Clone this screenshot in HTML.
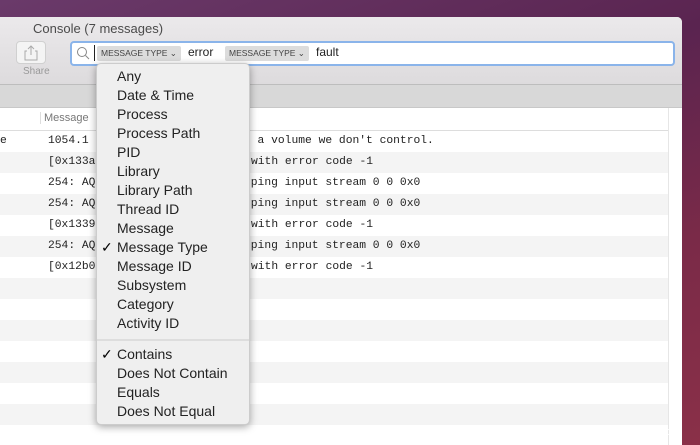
<!DOCTYPE html><html><head><style>
html,body{margin:0;width:700px;height:445px;overflow:hidden}
body{position:relative;font-family:"Liberation Sans",sans-serif;
background:linear-gradient(160deg,#6a3a6a 0%,#5a2450 40%,#7a2a48 70%,#8a3048 100%);}
.win{position:absolute;left:0;top:17px;width:682px;height:428px;background:#fff;border-radius:0 5px 0 0;overflow:hidden}
.tb{position:absolute;left:0;top:0;width:682px;height:67px;background:linear-gradient(#ebe9eb,#dddbdd);border-bottom:1px solid #bdbdbd}
.title{position:absolute;left:33px;top:4px;font-size:13px;color:#4a4a4a}
.share{position:absolute;left:16px;top:24px;width:28px;height:21px;border:1px solid #d0d0d0;border-radius:4px;background:#f4f4f4}
.sl{position:absolute;left:23px;top:49px;font-size:10px;color:#999}
.search{position:absolute;left:70px;top:24px;width:601px;height:21px;border:2px solid #8ab4ea;border-radius:4px;background:#fff}
.tok{position:absolute;top:3px;height:15px;background:#dcdcdc;font-size:8.5px;color:#444;line-height:15px;padding:0 4px;border-radius:2px}
.txt{position:absolute;top:2px;font-size:12px;color:#222}
.band{position:absolute;left:0;top:68px;width:682px;height:22px;background:#d8d8d8;border-bottom:1px solid #c8c8c8}
.hdr{position:absolute;left:0;top:91px;width:668px;height:22px;background:#fff;border-bottom:1px solid #ddd}
.hdr span{position:absolute;left:40px;top:4px;font-size:11px;color:#777;border-left:1px solid #ddd;padding-left:3px}
.rows{position:absolute;left:0;top:114px;width:668px}
.r{height:21px;font-family:"Liberation Mono",monospace;font-size:11.3px;color:#222;line-height:21px;position:relative;white-space:pre}
.r:nth-child(even){background:#f4f4f4}
.r b{font-weight:normal;position:absolute;top:0}
.vs{position:absolute;left:668px;top:91px;width:14px;height:400px;border-left:1px solid #e6e6e6;background:#fff}
.menu{position:absolute;left:96px;top:63px;width:154px;height:362px;background:#efefef;border-radius:5px;box-shadow:0 2px 8px rgba(0,0,0,.35);border:1px solid #ccc;box-sizing:border-box}
.mi{position:absolute;left:20px;font-size:14px;color:#222;line-height:19px}
.ck{position:absolute;left:4px;font-size:14px;line-height:19px}
.sep{position:absolute;left:0;top:275px;width:152px;height:2px;background:#ddd}
</style></head><body>
<div class="win">
<div class="tb">
<div class="title">Console (7 messages)</div>
<div class="share"><svg width="28" height="21"><path d="M10 9h-2v9h12v-9h-2M14 4v9M11 7l3-3 3 3" stroke="#aaa" fill="none" stroke-width="1"/></svg></div>
<div class="sl">Share</div>
<div class="search">
<svg style="position:absolute;left:4px;top:3px" width="14" height="14"><circle cx="6" cy="6" r="4.5" stroke="#888" fill="none"/><path d="M9.5 9.5l3.5 3.5" stroke="#888"/></svg>
<div style="position:absolute;left:22px;top:2px;width:1px;height:16px;background:#222"></div>
<div class="tok" style="left:25px">MESSAGE TYPE ⌄</div>
<div class="txt" style="left:116px">error</div>
<div class="tok" style="left:153px">MESSAGE TYPE ⌄</div>
<div class="txt" style="left:244px">fault</div>
</div>
</div>
<div class="band"></div>
<div class="hdr"><span>Message</span></div>
<div class="rows">
<div class="r"><b style="left:0">e</b><b style="left:48px">1054.1</b><b style="left:244px">r a volume we don't control.</b></div>
<div class="r"><b style="left:48px">[0x133a</b><b style="left:251px">with error code -1</b></div>
<div class="r"><b style="left:48px">254: AQ</b><b style="left:244px">pping input stream 0 0 0x0</b></div>
<div class="r"><b style="left:48px">254: AQ</b><b style="left:244px">pping input stream 0 0 0x0</b></div>
<div class="r"><b style="left:48px">[0x1339</b><b style="left:251px">with error code -1</b></div>
<div class="r"><b style="left:48px">254: AQ</b><b style="left:244px">pping input stream 0 0 0x0</b></div>
<div class="r"><b style="left:48px">[0x12b0</b><b style="left:251px">with error code -1</b></div>
<div class="r"> </div><div class="r"> </div><div class="r"> </div><div class="r"> </div><div class="r"> </div><div class="r"> </div><div class="r"> </div><div class="r"> </div><div class="r"> </div>
</div>
<div class="vs"></div>
</div>
<div class="menu">
<div class="mi" style="top:3px">Any</div>
<div class="mi" style="top:22px">Date &amp; Time</div>
<div class="mi" style="top:41px">Process</div>
<div class="mi" style="top:60px">Process Path</div>
<div class="mi" style="top:79px">PID</div>
<div class="mi" style="top:98px">Library</div>
<div class="mi" style="top:117px">Library Path</div>
<div class="mi" style="top:136px">Thread ID</div>
<div class="mi" style="top:155px">Message</div>
<div class="ck" style="top:174px">✓</div><div class="mi" style="top:174px">Message Type</div>
<div class="mi" style="top:193px">Message ID</div>
<div class="mi" style="top:212px">Subsystem</div>
<div class="mi" style="top:231px">Category</div>
<div class="mi" style="top:250px">Activity ID</div>
<div class="sep"></div>
<div class="ck" style="top:281px">✓</div><div class="mi" style="top:281px">Contains</div>
<div class="mi" style="top:300px">Does Not Contain</div>
<div class="mi" style="top:319px">Equals</div>
<div class="mi" style="top:338px">Does Not Equal</div>
</div>
<div style="position:absolute;left:625px;top:426px;font-size:11px;color:#fff">wsxdn.com</div>
</body></html>
